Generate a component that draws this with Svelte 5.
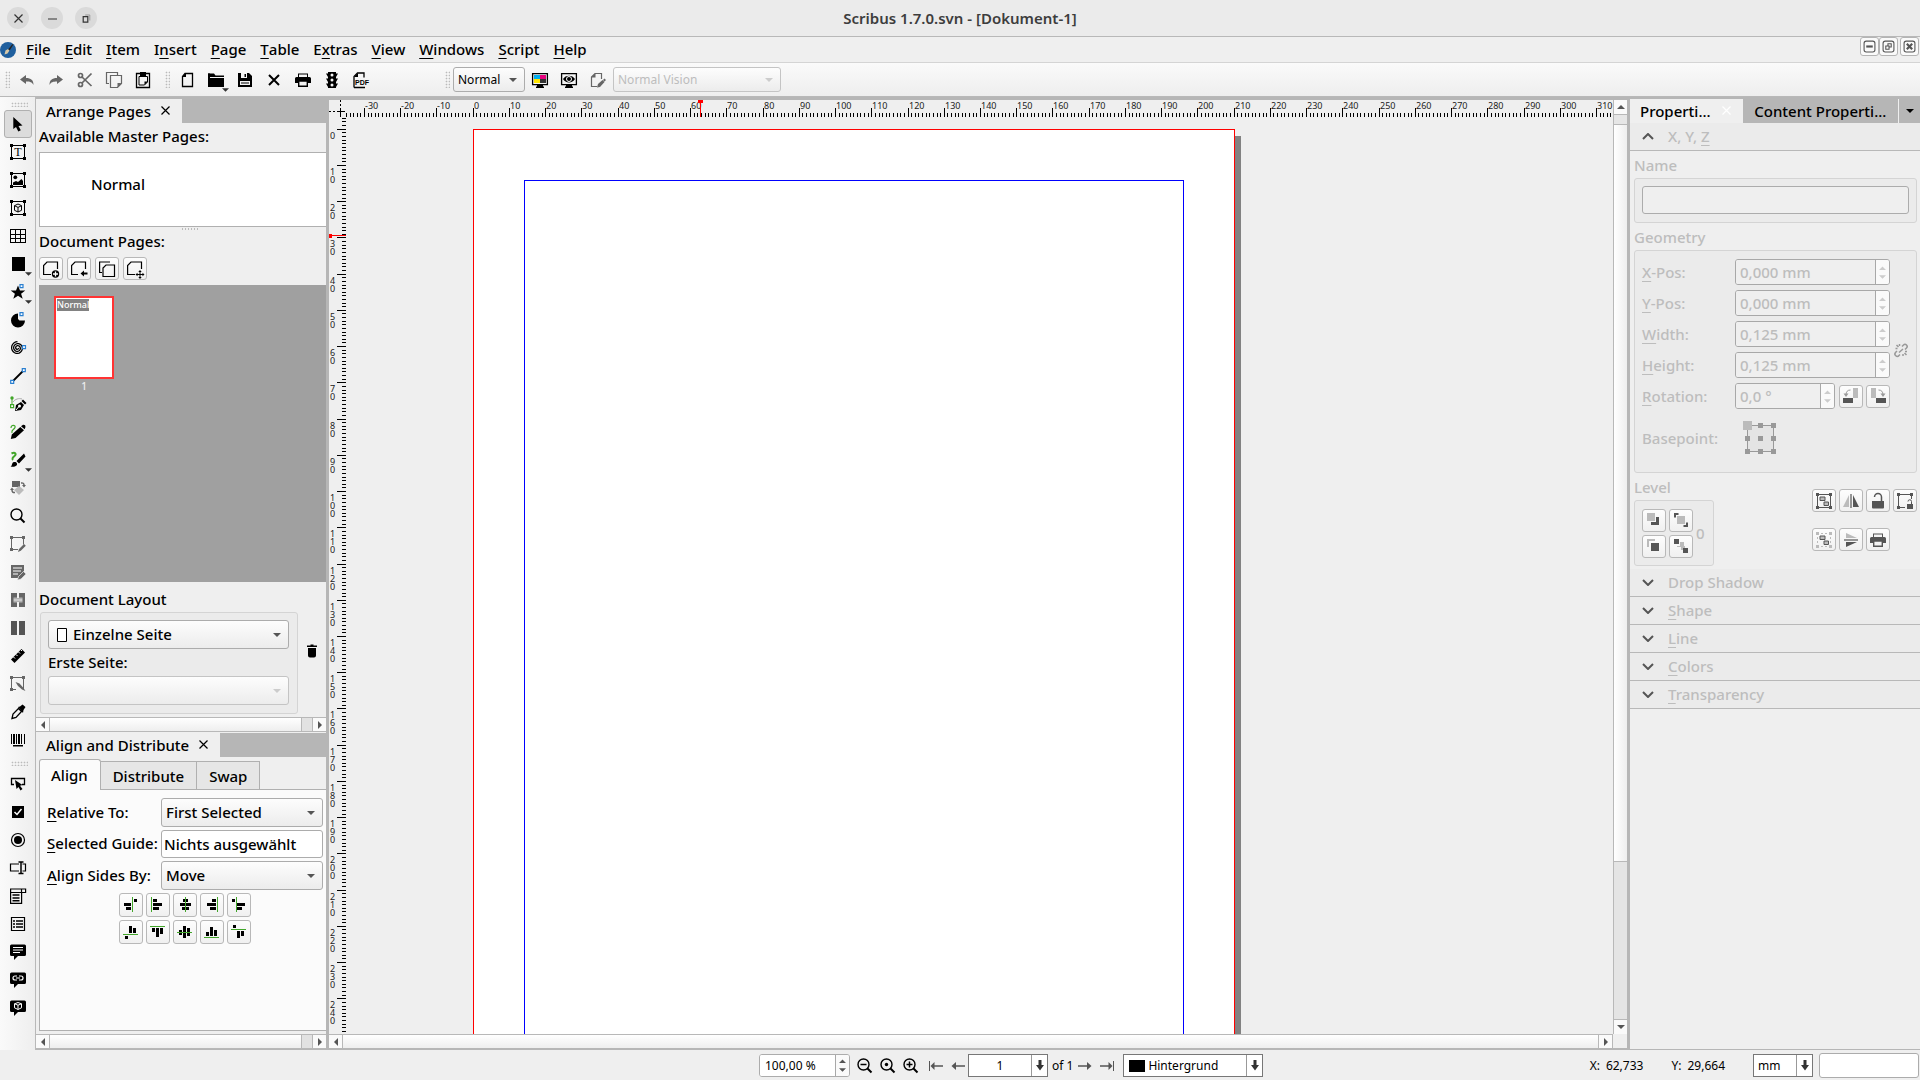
<script>
  const frame = '<path d="M1.5 1.5h13v13h-13z" fill="none" stroke="currentColor" shape-rendering="crispEdges"/><path d="M0 0h3v3H0zM13 0h3v3h-3zM0 13h3v3H0zM13 13h3v3h-3z"/>';
  const bubble = '<path d="M1.5 .5h13a1.500 1.500 0 0 1 1.500 1.500v8.500a1.500 1.500 0 0 1-1.500 1.500H8l-4 4v-4H1.500A1.500 1.500 0 0 1 0 10.500V2A1.500 1.500 0 0 1 1.500.5z"/>';
  const cube = '<path d="M8 4l3.500 1.700v4.600L8 12l-3.500-1.700V5.700zM4.500 5.700L8 7.400l3.500-1.700M8 7.400V12" fill="none" stroke="currentColor"/>';
  const lens = '<circle cx="6.500" cy="6.500" r="5.500" fill="none" stroke="currentColor" stroke-width="1.400"/><path d="M10.500 10.500l4 4" stroke="currentColor" stroke-width="2"/>';
  const blueDot = (x, y) => `<path d="M${x} ${y}h3v3h-3z" fill="#fff" stroke="#2a7fd0" stroke-width="1.200"/>`;
  const spiralPoints = Array.from({ length: 61 }, (_, n) => {
    const angle = (n / 60) * Math.PI * 5.5;
    const radius = 0.8 + (n / 60) * 5.6;
    return `${(7.5 + radius * Math.cos(angle)).toFixed(2)},${(8 + radius * Math.sin(angle)).toFixed(2)}`;
  }).join(' ');
  const icons = {
    pointer: '<path d="M3.300 1v12l2.700-2 2.300 4.500 2.500-1.200-2.300-4.300 4-.6z"/>',
    text: frame + '<text x="8" y="12" text-anchor="middle" font-size="12" font-family="Liberation Serif, serif">T</text>',
    image: frame + '<circle cx="5.300" cy="5.300" r="1.900"/><path d="M3 13v-2.500L6 9l2 1 3.500-3L13 9v4z"/>',
    render: frame + cube,
    table: '<path d="M.5 1.500h15v13H.5zM.5 6h15M.5 10.500h15M5.500 1.500v13M10.500 1.500v13" fill="none" stroke="currentColor" shape-rendering="crispEdges"/>',
    shape: '<path d="M2 1h13v14H2z"/>',
    star: '<path d="M8 1.500l2 5h5.300l-4.200 3.200 1.600 5.100L8 11.700l-4.700 3.100 1.600-5.100L.7 6.500H6z"/>' + blueDot(10, 0.7),
    arc: '<path d="M8 1.500a7 7 0 1 0 7 7H9.500L8 7z"/>' + blueDot(10, 0.7),
    spiral: `<polyline points="${spiralPoints}" fill="none" stroke="currentColor" stroke-width="1.300"/>` + blueDot(12.5, 5.7),
    line: '<path d="M3 13L13 3" stroke="currentColor" stroke-width="1.800"/>' + blueDot(0.7, 12.3) + blueDot(12.3, 0.7),
    bezier: '<path d="M2 2v7" stroke="#42a62a"/><circle cx="2" cy="2" r="1.700" fill="#42a62a"/><path d="M.6 8.600h3v3h-3z" fill="#fff" stroke="#42a62a" stroke-width="1.200"/><path d="M3 6c2-3 6-4 9-3" fill="none" stroke="#aaa"/><path d="M5 15l1-6 5-3 3 3-3 5zM11.500 5l1.500-1.500L16.500 7 15 8.500z"/><path d="M6 14l3-3.500" stroke="#fff"/><circle cx="9.500" cy="10" r="1.500" fill="#fff"/>',
    pencil: '<path d="M1 4c0-4 5-3 4-.5S1 5.500 2 9" fill="none" stroke="#42a62a" stroke-width="1.200"/><path d="M.8 15l1-4.500 8.500-7.500L14 6.300 5.500 14zM11 2.200L13 .8q2.800-.3 2.500 2.200L14.600 5.300z"/>',
    brush: '<path d="M1.500 1.500c4-2 5 1 3 2.500S2 7 3 8" fill="none" stroke="#42a62a" stroke-width="2"/><path d="M.5 14.500c2-.5 1-4 3.500-4.500s4 2 2.500 3.500-4 1.500-6 1zM6.500 9L14 1.500l1.500 3L9 11.500z"/>',
    rotate: '<g fill="#666"><path d="M2 1h8v6H2z"/><path d="M9 15l-5-5 5-4 5 4z" fill="#bbb"/><path d="M11 3q3-.5 3 2" fill="none" stroke="#666" stroke-width="1.500"/><path d="M12 5h4l-2 2.500zM0 10h4L2 7.500z"/><path d="M2 10q0 3 3 2.500" fill="none" stroke="#666" stroke-width="1.500"/></g>',
    zoom: lens,
    editframe: '<path d="M1.500 14V1.500h12v7M2 13.500h6" fill="none" stroke="#666"/><path d="M0 0h3v3H0zM12 0h3v3h-3zM0 12h3v3H0zM8 16l1-3 5-5 1.800 1.800-5 5z" fill="#666"/>',
    edittext: '<path d="M1 1h13v6l-6 6v1H1z" fill="#666"/><path d="M3 4h9M3 7h8M3 10h5" stroke="#fff"/><path d="M7.500 16l1-3.500 5-5L16 10l-5 5z" fill="#666" stroke="#eee" stroke-width=".6"/>',
    link: '<path d="M1 1h6v5h2V1h6v14H9v-5H7v5H1z" fill="#666"/><path d="M3.500 6.500h9v3h-9z" fill="#ccc"/><path d="M3.500 6h9M3.500 10h9" stroke="#eee" stroke-width=".6"/>',
    unlink: '<path d="M1 1h6v14H1zM9 1h6v14H9z" fill="#555"/>',
    measure: '<path d="M1 11.500L11.500 1 15 4.500 4.500 15z"/><path d="M3.500 9l1.500 1.500M6 6.500L7.500 8M8.500 4L10 5.500M11 2l1 1" stroke="#fff"/>',
    copyprops: '<path d="M1.500 14V1.500h12V14M2 13.500h4" fill="none" stroke="#666"/><path d="M0 0h3v3H0zM12 0h3v3h-3zM0 12h3v3H0zM5.500 6l4 1.500 4 4.500 2 3-3.500-1.500L8 10z" fill="#666"/>',
    dropper: '<path d="M2 14.500l1-4.500L8.500 4.500l3 3L6 13.500z" fill="none" stroke="currentColor" stroke-width="1.300"/><path d="M8 3l2-.5 2.500-2 3 2.500-2 3-.5 3z"/>',
    barcode: '<path d="M1 2h1v10H1zM3 2h2v10H3zM6 2h1v10H6zM8 2h2v10H8zM11 2h1v10h-1zM14 2h1v10h-1zM3 13h10v1.500H3z"/>',
    pdfbutton: '<path d="M4 8.500H1.500v-6h13v6H12" fill="none" stroke="currentColor" stroke-width="1.300"/><path d="M5 4l7.500 5-2.500.7 2.500 3.300-2 1.500-2-3.500L6.500 13z"/>',
    check: '<path d="M2 2h12v12H2z"/><path d="M4.500 8l2.500 2.500L11.500 5" fill="none" stroke="#fff" stroke-width="1.500"/>',
    radio: '<circle cx="8" cy="8" r="6.500" fill="none" stroke="currentColor" stroke-width="1.200"/><circle cx="8" cy="8" r="4"/>',
    field: '<path d="M9 4H.5v7H9M12.500 4h3v7h-3" fill="none" stroke="currentColor" stroke-width="1.200"/><path d="M8.500 2h5M8.500 13.500h5M11 2v11.500" stroke="currentColor" stroke-width="1.500"/>',
    combo: '<path d="M.6 1h15v3.500H.6zM.6 4.500V15.400h11V4.500M11.500 1v3.500" fill="none" stroke="currentColor" stroke-width="1.200"/><path d="M2.500 7h7M2.500 10h7M2.500 12.800h7" stroke="currentColor" stroke-width="1.500"/>',
    list: '<path d="M1.500 1.500h13v13h-13z" fill="none" stroke="currentColor" stroke-width="1.200"/><path d="M3 5h2M6 5h7M3 8h2M6 8h7M3 11h2M6 11h7" stroke="currentColor" stroke-width="1.700"/>',
    note: bubble + '<path d="M3 3.500h10M3 6h10M3 8.500h7" stroke="#fff"/>',
    linknote: bubble + '<path d="M7 4H5a2 2 0 0 0 0 4h2M9 4h2a2 2 0 0 1 0 4H9M6 6h4" fill="none" stroke="#fff" stroke-width="1.200"/>',
    cubenote: bubble + '<path d="M8 2.500l3.500 1.300v4L8 9.500 4.500 7.800v-4zM4.500 3.800L8 5.200l3.500-1.400M8 5.200v4" fill="none" stroke="#fff"/>',
    undo: '<path d="M1 7.500L7 3v3c5 0 7.500 2 7.500 7-1.500-3-3.500-3.500-7.500-3.500V12z" fill="#666"/>',
    redo: '<path d="M15 7.500L9 3v3c-5 0-7.500 2-7.500 7C3 10 5 9.500 9 9.500V12z" fill="#666"/>',
    cut: '<g fill="none" stroke="#666" stroke-width="1.700"><path d="M5 5l9.500 9M5 11l9.500-9.500"/><circle cx="3.500" cy="3.500" r="2"/><circle cx="3.500" cy="12.500" r="2"/></g>',
    copy: '<path d="M3 11.500H.5V.5h11V3M4.500 3.500h11v8l-4 4h-7z" fill="none" stroke="#666" stroke-width="1.200"/><path d="M15.500 11h-4v4.500z" fill="#666"/>',
    paste: '<path d="M1.500 1.500h13v14h-13z" fill="none" stroke="currentColor" stroke-width="1.300"/><path d="M5 0h6v4H5z"/><path d="M4 4.500h8.500V10L9.500 13H4z" fill="none" stroke="currentColor"/><path d="M13 9.500H9.500V13z"/>',
    newdoc: '<path d="M6 1.500h7.500v13h-10v-10z" fill="none" stroke="currentColor" stroke-width="1.300"/><path d="M3 5l4-4v4z"/>',
    open: '<path d="M0 1.500h6l1.500 2H16V5H0zM0 6h16v9H0z"/><path d="M0 1.500h2V15H0z"/>',
    save: '<path d="M1 1h11l3 3v11H1z"/><path d="M4 1h6v5H4zM3 9h10v4H3z" fill="#f4f4f4"/><path d="M7.500 2H9v3H7.500zM4 10.500h8v1H4z"/>',
    close: '<path d="M3 3l10 10M13 3L3 13" stroke="currentColor" stroke-width="2"/>',
    print: '<path d="M3 1.500h10V5H3zM1.500 5h13A1.500 1.500 0 0 1 16 6.500V11h-3V9H3v2H0V6.500A1.500 1.500 0 0 1 1.500 5z"/><path d="M4 2.500h8V5H4z" fill="#f4f4f4"/><path d="M3.700 9h8.600v5.300H3.700z" fill="#f4f4f4" stroke="currentColor" stroke-width="1.400"/>',
    preflight: '<path d="M4 0h8v16H4z"/><path d="M2 1.500h12L12 5H4zM2 6.500h12l-2 3.500H4zM2 11.500h12L12 15H4z"/><g fill="#f4f4f4"><circle cx="8" cy="3" r="1.500"/><circle cx="8" cy="8" r="1.500"/><circle cx="8" cy="13" r="1.500"/></g>',
    pdf: '<path d="M1 15.500v-11L4.500 1H11v4.500M1 15.500h11" fill="none" stroke="currentColor" stroke-width="1.300"/><path d="M1 5l4-4v4z"/><text x="2" y="12.500" font-size="7" font-weight="700" font-family="Liberation Sans, sans-serif">PDF</text>',
    color: '<path d="M.6 1.600h14.800v11H.6z" fill="none" stroke="currentColor" stroke-width="1.300"/><path d="M5 13h6v1.500h1V16H4v-1.500h1z"/><path d="M2 3h6v4H2z" fill="#00aeef"/><path d="M8 3h6v4H8z" fill="#e6007e"/><path d="M2 7h6v4H2z" fill="#ffe600"/><path d="M8 7h6v4H8z" fill="#333"/>',
    preview: '<path d="M.6 1.600h14.800v11H.6z" fill="none" stroke="currentColor" stroke-width="1.300"/><path d="M5 13h6v1.500h1V16H4v-1.500h1zM2 7c2.500-4.500 9.500-4.500 12 0-2.500 4.500-9.500 4.500-12 0z"/><circle cx="8" cy="7" r="2.500" fill="none" stroke="#fff"/>',
    editdoc: '<path d="M7 14.500H1.500V5L5 1.500h6.500V7" fill="none" stroke="#666" stroke-width="1.200"/><path d="M1 5.500L5.500 1v4.500zM7 15.500l1-3.500 4.500-4 2 2-4.500 5zM13 8l1.500-1.500L16 8l-1.500 1.500z" fill="#666"/>',
    pageadd: '<path d="M8 13.500H.6V4.500L4 1h10.500v7" fill="none" stroke="currentColor" stroke-width="1.200"/><circle cx="12.500" cy="13" r="3.700"/><path d="M10 13h5M12.500 10.500v5" stroke="#fff" stroke-width="1.300"/>',
    pageimport: '<path d="M7 13.500H.6V4.500L4 1h10.500v7" fill="none" stroke="currentColor" stroke-width="1.200"/><path d="M9.500 12.500l3.500-3v2h3.500v2H13v2z"/>',
    pagecopy: '<path d="M3 11.500H.6V1H11M7 4h8.500v11.500H4V7z" fill="none" stroke="currentColor" stroke-width="1.200"/>',
    pagemove: '<path d="M8 13.500H.6V4.500L4 1h10.500v7" fill="none" stroke="currentColor" stroke-width="1.200"/><path d="M13 10v7M9.500 13.500h7" stroke="currentColor"/><path d="M13 9l1.700 2h-3.400zM13 18l1.700-2h-3.400zM8.500 13.500l2-1.700v3.400zM17.500 13.500l-2-1.700v3.400z"/>',
    trash: '<path d="M3 2.500h10V4H3zM6.500 1.500h3v1.500h-3zM4 5h8v7.500a2 2 0 0 1-2 2H6a2 2 0 0 1-2-2z"/>',
    rotleft: '<path d="M0 10h10v5H0z" fill="#555"/><path d="M10 0h5v10h-5z" fill="#bbb"/><path d="M7.500 2Q3 2 3 7" fill="none" stroke="#999"/><path d="M.5 5.500h5L3 9z" fill="#999"/>',
    rotright: '<path d="M6 10h10v5H6z" fill="#555"/><path d="M1 0h5v10H1z" fill="#bbb"/><path d="M8.500 2Q13 2 13 7" fill="none" stroke="#999"/><path d="M10.500 5.500h5L13 9z" fill="#999"/>',
    chain: '<g fill="none" stroke="#999" stroke-width="1.500"><path d="M7 12.500l-1 1a2.100 2.100 0 0 1-3.500-3L4 9M9 4.500l1.500-1.500a2.100 2.100 0 0 1 3 3L12 7.500M6 10.500L10 7M3.500 3l2 2M6.500 2v2M10 12v2M11.500 11l2 2M2.500 6.500h2M12 9.500h2"/></g>',
    raise: '<path d="M1 1h8v8H1z" fill="#bbb"/><path d="M10 5h3v8H5v-3h5z" fill="#555"/>',
    top: '<path d="M4 4h8v8H4z" fill="#bbb"/><path d="M1 5.500V1h4.500v2H3v2.500zM15 10.500V15h-4.500v-2H13v-2.500z" fill="#555"/>',
    lower: '<path d="M1 1h8v2H3v6H1z" fill="#bbb"/><path d="M5 5h8v8H5z" fill="#555"/>',
    bottom: '<path d="M4 8h3V4h4v4h1v4H8V9H4z" fill="#bbb"/><path d="M1 1h5v5H1zM10 10h5v5h-5z" fill="#555"/>',
    group: frame + '<path d="M4 4h5v3.500H4zM8 9h4.500v3.500H8z" fill="#bbb" stroke="currentColor"/>',
    ungroup: '<path d="M0 0h3v3H0zM13 0h3v3h-3zM0 13h3v3H0zM13 13h3v3h-3z" fill="#bbb"/><path d="M5 1.500h6M5 14.500h6M1.500 5v6M14.500 5v6" stroke="#bbb" stroke-dasharray="2 2"/><path d="M4 4h5v3.500H4zM8 9h4.500v3.500H8z" fill="#bbb" stroke="currentColor"/>',
    fliph: '<path d="M0 14L6 2v12z" fill="#bbb"/><path d="M16 14L10 2v12z"/><path d="M8 1v14" stroke="currentColor" stroke-width="1.200"/>',
    flipv: '<path d="M3 1l11 5H3z" fill="#bbb"/><path d="M3 15l11-5H3z"/><path d="M1 8h14" stroke="currentColor" stroke-width="1.200"/>',
    lock: '<path d="M2 8h12v6.500a1 1 0 0 1-1 1H3a1 1 0 0 1-1-1z"/><path d="M4.500 4a3.500 3.500 0 0 1 7 0v4" fill="none" stroke="currentColor" stroke-width="1.500"/>',
    locksize: '<path d="M1.500 1.500h13V6M1.500 1.500v13H8" fill="none" stroke="currentColor"/><path d="M0 0h3v3H0zM13 0h3v3h-3zM0 13h3v3H0zM10 11h6v5h-6z"/><path d="M11 8.500a1.700 1.700 0 0 1 3.500 0V11" fill="none" stroke="currentColor"/>',
    lensminus: lens + '<path d="M3.500 6.500h6" stroke="currentColor" stroke-width="1.500"/>',
    lensdot: lens + '<circle cx="6.500" cy="6.500" r="1.700"/>',
    lensplus: lens + '<path d="M3.500 6.500h6M6.500 3.500v6" stroke="currentColor" stroke-width="1.500"/>',
    first: '<path d="M1.500 3v10" stroke="#555"/><path d="M5 8h10" stroke="#555" stroke-width="1.500"/><path d="M2.500 8l4-4v8z" fill="#555"/>',
    prev: '<path d="M3 8h12" stroke="#555" stroke-width="1.500"/><path d="M1.500 8l4.500-4v8z" fill="#555"/>',
    next: '<path d="M1 8h12" stroke="#555" stroke-width="1.500"/><path d="M14.500 8L10 4v8z" fill="#555"/>',
    last: '<path d="M14.500 3v10" stroke="#555"/><path d="M1 8h10" stroke="#555" stroke-width="1.500"/><path d="M13.500 8l-4-4v8z" fill="#555"/>',
    al1: '<path d="M9.500 0v15" stroke="#42a62a"/><path d="M11 2h3v3h-3zM1 6h7v3H1zM3 10h5v3H3z"/>',
    al2: '<path d="M1.500 0v15" stroke="#42a62a"/><path d="M3 2h4v3H3zM3 6h9v3H3zM3 10h6v3H3z"/>',
    al3: '<path d="M6 2h5v3H6zM3 6h11v3H3zM5 10h7v3H5z"/><path d="M8.500 0v15" stroke="#42a62a"/>',
    al4: '<path d="M13.500 0v15" stroke="#42a62a"/><path d="M8 2h4v3H8zM3 6h9v3H3zM6 10h6v3H6z"/>',
    al5: '<path d="M5.500 0v15" stroke="#42a62a"/><path d="M1 2h3v3H1zM6 6h8v3H6zM6 10h5v3H6z"/>',
    al6: '<path d="M0 10.500h15" stroke="#42a62a"/><path d="M2 12h3v3H2zM6 2h3v7H6zM10 4h3v5h-3z"/>',
    al7: '<path d="M0 2.500h15" stroke="#42a62a"/><path d="M2 4h3v4H2zM6 4h3v9H6zM10 4h3v6h-3z"/>',
    al8: '<path d="M2 6h3v5H2zM6 2h3v12H6zM10 4h3v8h-3z"/><path d="M0 8.500h15" stroke="#42a62a"/>',
    al9: '<path d="M0 13.500h15" stroke="#42a62a"/><path d="M2 8h3v4H2zM6 3h3v9H6zM10 6h3v6h-3z"/>',
    al10: '<path d="M0 5.500h15" stroke="#42a62a"/><path d="M2 1h3v3H2zM6 7h3v7H6zM10 7h3v5h-3z"/>',
  };

  const menus = [['', 'F', 'ile'], ['', 'E', 'dit'], ['', 'I', 'tem'], ['I', 'n', 'sert'], ['', 'P', 'age'], ['', 'T', 'able'], ['E', 'x', 'tras'], ['', 'V', 'iew'], ['', 'W', 'indows'], ['', 'S', 'cript'], ['', 'H', 'elp']];
  const editTools = ['undo', 'redo', 'cut', 'copy', 'paste'];
  const fileTools = ['newdoc', 'open', 'save', 'close', 'print', 'preflight', 'pdf'];
  const tools = ['pointer', 'text', 'image', 'render', 'table', 'shape', 'star', 'arc', 'spiral', 'line', 'bezier', 'pencil', 'brush', 'rotate', 'zoom', 'editframe', 'edittext', 'link', 'unlink', 'measure', 'copyprops', 'dropper', 'barcode'];
  const pdfTools = ['pdfbutton', 'check', 'radio', 'field', 'combo', 'list', 'note', 'linknote', 'cubenote'];
  const withMenu = ['open', 'shape', 'star', 'brush'];
  const geometry = [
    { id: 'xpos', key: 'X', rest: '-Pos:', value: '0,000 mm' },
    { id: 'ypos', key: 'Y', rest: '-Pos:', value: '0,000 mm' },
    { id: 'width', key: 'W', rest: 'idth:', value: '0,125 mm' },
    { id: 'height', key: 'H', rest: 'eight:', value: '0,125 mm' },
  ];
  const sections = [['', 'Drop Shadow'], ['S', 'hape'], ['L', 'ine'], ['C', 'olors'], ['T', 'ransparency']];

  let viewWidth = $state(1267);
  let viewHeight = $state(917);
  const scale = 3.6235;
  const originX = 127;
  const originY = 12;
  const pageRight = originX + Math.round(210 * scale);
  const ticks = (origin, length) => {
    const out = [];
    for (let mm = Math.ceil(-origin / scale); origin + mm * scale < length - 1; mm++) {
      out.push({ mm, at: Math.floor(origin + mm * scale + 0.2), major: mm % 10 === 0 });
    }
    return out;
  };
  const hTicks = $derived(ticks(originX, viewWidth));
  const vTicks = $derived(ticks(originY, viewHeight));
</script>

{#snippet icon(name)}
  <svg class="icon" viewBox="0 0 16 16" fill="currentColor" aria-hidden="true">{@html icons[name]}</svg>
{/snippet}

{#snippet tool(name, active = false)}
  <button class="tool" class:active aria-label={name}>
    {@render icon(name)}
    {#if withMenu.includes(name)}<svg class="more" viewBox="0 0 8 4" aria-hidden="true"><path d="M0 0h8L4 4z" fill="#333" /></svg>{/if}
  </button>
{/snippet}

{#snippet caret()}
  <svg class="caret" viewBox="0 0 8 4" aria-hidden="true"><path d="M0 0h8L4 4z" fill="currentColor" /></svg>
{/snippet}

{#snippet hbar(tail)}
  <div class="hbar">
    <button aria-label="Scroll left"><svg viewBox="0 0 4 8"><path d="M4 0v8L0 4z" fill="#555" /></svg></button>
    <span class="thumb"></span>
    {#if tail}<span class="trough"></span>{/if}
    <button aria-label="Scroll right"><svg viewBox="0 0 4 8"><path d="M0 0v8l4-4z" fill="#555" /></svg></button>
  </div>
{/snippet}

{#snippet steps()}
  <span class="steps">
    <svg viewBox="0 0 8 14" aria-hidden="true"><path d="M0 4h8L4 0zM0 10h8l-4 4z" fill="currentColor" /></svg>
  </span>
{/snippet}

{#snippet cross()}
  <svg class="cross" viewBox="0 0 9 9" aria-hidden="true"><path d="M.5.5l8 8M8.500.5l-8 8" stroke="currentColor" stroke-width="1.200" /></svg>
{/snippet}

{#snippet down()}
  <svg viewBox="0 0 8 11" aria-hidden="true"><path d="M2.500 0h3v5H8l-4 5.500L0 5h2.500z" fill="#333" /></svg>
{/snippet}

<div class="app">
  <header class="title">
    <div class="winbtns">
      <button aria-label="Close window">{@render cross()}</button>
      <button aria-label="Minimize window"><svg viewBox="0 0 9 9"><path d="M0 5h9" stroke="#333" /></svg></button>
      <button aria-label="Restore window"><svg viewBox="0 0 9 9"><path d="M1.200 2.600h4.600v5.600H1.200z" fill="none" stroke="#333" stroke-width="1.200" /><path d="M3.200 1h4.600v5.500" fill="none" stroke="#999" /></svg></button>
    </div>
    <h1>Scribus 1.7.0.svn - [Dokument-1]</h1>
    <span></span>
  </header>

  <nav class="menubar">
    <svg class="logo" viewBox="0 0 16 16" aria-hidden="true"><circle cx="8" cy="8" r="8" fill="#1f5f9e" /><path d="M4.500 12.500l1-4L8 7l1.500 1.500-2 3z" fill="#d8c8a8" /><path d="M8.300 7.200L12.500 2l.8.8-3.600 5.600z" fill="#222" /></svg>
    {#each menus as [a, k, b]}
      <button>{a}<u>{k}</u>{b}</button>
    {/each}
    <div class="mdi">
      <button aria-label="Minimize document"><svg viewBox="0 0 12 12"><rect x="1" y="1" width="10" height="10" rx="2" fill="none" stroke="#555" /><path d="M3 6h6" stroke="#555" stroke-width="2" /></svg></button>
      <button aria-label="Restore document"><svg viewBox="0 0 12 12"><rect x="1" y="1" width="10" height="10" rx="2" fill="none" stroke="#555" /><path d="M3.500 5.500h3v3h-3zM5.500 5V3.500h3v3H7" fill="none" stroke="#555" /></svg></button>
      <button class="apart" aria-label="Close document"><svg viewBox="0 0 12 12"><rect x="1" y="1" width="10" height="10" rx="2" fill="none" stroke="#555" /><path d="M3.500 3.500l5 5M8.500 3.500l-5 5" stroke="#555" stroke-width="2" /></svg></button>
    </div>
  </nav>

  <div class="toolbar">
    <div class="group"><i class="grip"></i>{#each editTools as t}{@render tool(t)}{/each}</div>
    <div class="group"><i class="grip"></i>{#each fileTools as t}{@render tool(t)}{/each}</div>
    <div class="group view">
      <i class="grip"></i>
      <div class="select short"><select aria-label="Preview quality"><option>Normal</option></select>{@render caret()}</div>
      {@render tool('color')}{@render tool('preview')}{@render tool('editdoc')}
      <div class="select long off"><select aria-label="Vision" disabled><option>Normal Vision</option></select>{@render caret()}</div>
    </div>
  </div>

  <main>
    <div class="palette">
      <i class="grip flat"></i>
      {#each tools as t, n}{@render tool(t, n === 0)}{/each}
      <i class="grip flat lower"></i>
      {#each pdfTools as t}{@render tool(t)}{/each}
    </div>

    <aside class="left">
      <section class="dock pages">
        <div class="docktabs"><div class="docktab">Arrange Pages <button aria-label="Close Arrange Pages">{@render cross()}</button></div></div>
        <div class="body">
          <h2>Available Master Pages:</h2>
          <div class="masters"><span>Normal</span></div>
          <i class="dots"></i>
          <h2 class="pageshead">Document Pages:</h2>
          <div class="pagebtns">
            {#each ['pageadd', 'pageimport', 'pagecopy', 'pagemove'] as t}<button class="sq" aria-label={t}>{@render icon(t)}</button>{/each}
          </div>
          <div class="thumbs">
            <div class="sheet"><span>Normal</span></div>
            <small>1</small>
          </div>
          <h2 class="layouthead">Document Layout</h2>
          <div class="layoutrow">
            <div class="box">
              <div class="select"><svg class="sheeticon" viewBox="0 0 10 14" aria-hidden="true"><path d="M.5.5h9v13h-9z" fill="#fff" stroke="#000" /></svg><select class="indent" aria-label="Document Layout"><option>Einzelne Seite</option></select>{@render caret()}</div>
              <label for="first">Erste Seite:</label>
              <div class="select off"><select id="first" disabled></select>{@render caret()}</div>
            </div>
            <button class="plain" aria-label="Delete page">{@render icon('trash')}</button>
          </div>
        </div>
        {@render hbar(true)}
      </section>

      <section class="dock align">
        <div class="docktabs"><div class="docktab">Align and Distribute <button aria-label="Close Align and Distribute">{@render cross()}</button></div></div>
        <div class="body">
          <div class="tabs" role="tablist">
            <button role="tab" aria-selected="true">Align</button>
            <button role="tab" aria-selected="false">Distribute</button>
            <button role="tab" aria-selected="false">Swap</button>
          </div>
          <div class="panel">
            <div class="form">
              <label for="rel"><u>R</u>elative To:</label>
              <div class="select"><select id="rel"><option>First Selected</option></select>{@render caret()}</div>
              <label for="guide"><u>S</u>elected Guide:</label>
              <input id="guide" value="Nichts ausgewählt" />
              <label for="sides"><u>A</u>lign Sides By:</label>
              <div class="select"><select id="sides"><option>Move</option></select>{@render caret()}</div>
            </div>
            <div class="aligns">
              {#each Array(10) as _, n}<button class="sq" aria-label={`Align ${n + 1}`}>{@render icon(`al${n + 1}`)}</button>{/each}
            </div>
          </div>
        </div>
        {@render hbar(true)}
      </section>
    </aside>

    <section class="editor">
      <svg class="corner" viewBox="0 0 17 17" shape-rendering="crispEdges" aria-hidden="true"><path d="M11.500 0v9M0 11.500h9" stroke="#000" stroke-dasharray="2 2" /><path d="M11.500 8v9M8 11.500h8" stroke="#000" /></svg>
      <div class="ruler h">
        <svg shape-rendering="crispEdges">
          {#each hTicks as t}
            <path d={`M${t.at + 0.5} ${t.major ? 8 : 13}V17`} stroke="#000" />
            {#if t.major}<text x={t.at + 1} y="9">{t.mm}</text>{/if}
          {/each}
          <path d="M352 0h5v3h-2v14h-1V3h-2z" fill="#f00" />
        </svg>
      </div>
      <div class="ruler v">
        <svg shape-rendering="crispEdges">
          {#each vTicks as t}
            <path d={`M${t.major ? 8 : 13} ${t.at + 0.5}H17`} stroke="#000" />
            {#if t.major && t.at + 30 < viewHeight + 12}
              <text>{#each String(t.mm) as digit, n}<tspan x="1" y={t.at + 10 + n * 8}>{digit}</tspan>{/each}</text>
            {/if}
          {/each}
          <path d="M0 117h3v1h14v1H3v2H0z" fill="#f00" />
        </svg>
      </div>
      <div class="view-area" bind:clientWidth={viewWidth} bind:clientHeight={viewHeight}>
        <svg shape-rendering="crispEdges" aria-label="Page 1">
          <rect x={pageRight + 1} y="19" width="6" height="1100" fill="#828282" />
          <rect x={originX + 0.5} y="12.5" width={pageRight - originX} height="1076" fill="#fff" stroke="#f00" />
          <rect x="178.5" y="63.5" width="659" height="974" fill="none" stroke="#00f" />
        </svg>
      </div>
      <div class="vbar">
        <button aria-label="Scroll up"><svg viewBox="0 0 8 4"><path d="M0 4h8L4 0z" fill="#555" /></svg></button>
        <span class="gap"></span>
        <span class="vthumb"></span>
        <span class="vtrough"></span>
        <button aria-label="Scroll down"><svg viewBox="0 0 8 4"><path d="M0 0h8L4 4z" fill="#555" /></svg></button>
      </div>
      <div class="hwrap">{@render hbar(false)}</div>
    </section>

    <aside class="right">
      <div class="docktabs">
        <div class="docktab">Properti... <button class="faint" aria-label="Close Properties">{@render cross()}</button></div>
        <button class="idle">Content Properti...</button>
        <button class="droptab" aria-label="All tabs">{@render caret()}</button>
      </div>
      <button class="section"><svg viewBox="0 0 12 7"><path d="M1 6l5-5 5 5" fill="none" stroke="#555" stroke-width="2" /></svg><span>X, Y, <u>Z</u></span></button>
      <div class="props">
        <label for="name">Name</label>
        <div class="box"><input id="name" disabled /></div>
        <h3>Geometry</h3>
        <div class="box geometry">
          <div class="linked">
            <div class="fields">
              {#each geometry as g}
                <label for={g.id}><u>{g.key}</u>{g.rest}</label>
                <div class="spin"><input id={g.id} value={g.value} disabled />{@render steps()}</div>
              {/each}
            </div>
            <button class="plain" aria-label="Keep proportions">{@render icon('chain')}</button>
          </div>
          <div class="rotation">
            <label for="rot"><u>R</u>otation:</label>
            <div class="spin"><input id="rot" value="0,0 °" disabled />{@render steps()}</div>
            <button class="sq" aria-label="Rotate left">{@render icon('rotleft')}</button>
            <button class="sq" aria-label="Rotate right">{@render icon('rotright')}</button>
          </div>
          <div class="base">
            <span>Basepoint:</span>
            <svg viewBox="0 0 33 33" shape-rendering="crispEdges" aria-hidden="true">
              <path d="M4.500 4.500h26v26h-26z" fill="#e4e4e4" stroke="#999" />
              {#each [4, 17, 30] as x}{#each [4, 17, 30] as y}<rect x={x - 2} y={y - 2} width="5" height="5" fill="#999" />{/each}{/each}
              <path d="M0 0h9v9H0z" fill="#bbb" />
            </svg>
          </div>
        </div>
        <div class="levels">
          <div>
            <h3>Level</h3>
            <div class="box level">
              <div class="order">
                {#each ['raise', 'top', 'lower', 'bottom'] as t}<button class="sq" aria-label={t}>{@render icon(t)}</button>{/each}
              </div>
              <span>0</span>
            </div>
          </div>
          <div class="actions">
            {#each ['group', 'fliph', 'lock', 'locksize', 'ungroup', 'flipv', 'print'] as t}<button class="sq" aria-label={t}>{@render icon(t)}</button>{/each}
          </div>
        </div>
      </div>
      {#each sections as [k, rest]}
        <button class="section"><svg viewBox="0 0 12 7"><path d="M1 1l5 5 5-5" fill="none" stroke="#555" stroke-width="2" /></svg><span>{#if k}<u>{k}</u>{/if}{rest}</span></button>
      {/each}
    </aside>
  </main>

  <footer>
    <div class="pager">
      <div class="spin zoomlevel"><input aria-label="Zoom" value="100,00 %" />{@render steps()}</div>
      <div class="lenses">
        {#each ['lensminus', 'lensdot', 'lensplus'] as t}<button class="plain" aria-label={t}>{@render icon(t)}</button>{/each}
      </div>
      <div class="arrows">
        {#each ['first', 'prev'] as t}<button class="plain" aria-label={t}>{@render icon(t)}</button>{/each}
      </div>
      <div class="flatselect page"><select aria-label="Page"><option>1</option></select>{@render down()}</div>
      <span class="of">of 1</span>
      <div class="arrows">
        {#each ['next', 'last'] as t}<button class="plain" aria-label={t}>{@render icon(t)}</button>{/each}
      </div>
      <div class="flatselect layer"><i class="swatch"></i><select aria-label="Layer"><option>Hintergrund</option></select>{@render down()}</div>
    </div>
    <div class="coords">
      <span>X:</span><span class="num">62,733</span><span>Y:</span><span class="num">29,664</span>
      <div class="flatselect unit"><select aria-label="Unit"><option>mm</option></select>{@render down()}</div>
      <input class="status" aria-label="Status" />
    </div>
  </footer>
</div>

<style>
  :global(body) { margin: 0; overflow: hidden; }
  .app, .app * { box-sizing: border-box; }
  .app { display: flex; flex-direction: column; height: 100vh; background: #efefef; color: #000; font: 500 15px/20px "Noto Sans", "Open Sans", sans-serif; white-space: nowrap; }
  button, input, select { font: inherit; color: inherit; margin: 0; padding: 0; }
  button { background: none; border: 0; display: inline-flex; align-items: center; justify-content: center; }
  svg { display: block; flex: none; }
  h1, h2, h3 { margin: 0; font-size: inherit; font-weight: inherit; }
  u { text-decoration: underline; text-decoration-thickness: 1px; text-underline-offset: 3px; text-decoration-skip-ink: none; }
  .icon { width: 16px; height: 16px; overflow: visible; }
  .caret { width: 8px; height: 4px; color: #555; }
  .cross { width: 9px; height: 9px; }

  .title { display: grid; grid-template-columns: 1fr auto 1fr; align-items: center; height: 37px; background: #ebebeb; border-bottom: 1px solid #b8b8b8; }
  .title h1 { font-weight: 600; color: #3d3d3d; }
  .winbtns { display: flex; gap: 12px; padding-left: 7px; }
  .winbtns button { width: 22px; height: 22px; border-radius: 50%; background: #dadada; color: #333; }
  .winbtns svg { width: 9px; height: 9px; }

  .menubar { display: flex; align-items: center; height: 26px; border-bottom: 1px solid #d4d4d4; }
  .logo { width: 16px; height: 16px; margin-right: 3px; }
  .menubar > button { padding: 0 7px 2px; }
  .mdi { display: flex; margin-left: auto; padding-right: 1px; align-self: flex-start; }
  .mdi button { width: 19px; height: 19px; border: 1px solid #b4b4b4; border-radius: 3px; background: #fafafa; }
  .mdi svg { width: 13px; height: 13px; }
  .mdi .apart { margin-left: 2px; }

  .toolbar { display: flex; height: 34px; padding-left: 5px; background: linear-gradient(#fafafa, #eee); border-bottom: 1px solid #b8b8b8; font-size: 12px; font-weight: 400; }
  .group { display: flex; align-items: center; margin-right: 8px; }
  .group.view { margin-left: 62px; }
  .grip { width: 5px; height: 17px; margin-right: 2px; background: radial-gradient(circle, #bbb 40%, transparent 50%) 0 0 / 3px 3px; }
  .view .grip { margin-right: 3px; }
  .grip.flat { width: 17px; height: 5px; margin: 5px 0 3px 7px; flex: none; }
  .grip.lower { margin: 7px 0 4px 7px; }
  .tool { width: 29px; height: 28px; position: relative; flex: none; }
  .more { position: absolute; right: 1px; bottom: 2px; width: 7px; height: 4px; }

  .select { display: grid; align-items: center; height: 29px; border: 1px solid #acacac; border-radius: 3px; background: linear-gradient(#fdfdfd, #ececec); }
  .select > * { grid-area: 1 / 1; }
  .select select { appearance: none; border: 0; background: none; width: 100%; height: 100%; padding: 0 22px 2px 4px; outline: 0; opacity: 1; }
  .select select.indent { padding-left: 24px; }
  .sheeticon { width: 10px; height: 14px; margin-left: 8px; }
  .select .caret { justify-self: end; margin-right: 7px; pointer-events: none; }
  .select.short { width: 72px; height: 25px; }
  .select.long { width: 168px; height: 25px; margin-left: 1px; }
  .toolbar .select select { padding-bottom: 0; }
  .off { border-color: #c4c4c4; color: #bdbdbd; }
  .off .caret { color: #ccc; }

  main { flex: 1; min-height: 0; display: grid; grid-template-columns: 36px 293px 1fr 293px; }
  .palette { display: flex; flex-direction: column; border-right: 1px solid #b8b8b8; background: linear-gradient(90deg, #fafafa, #eee); padding: 0 3px 0 4px; overflow: hidden; }
  .palette .tool { width: 28px; }
  .palette .active { border: 1px solid #b0b0b0; border-radius: 3px; background: #dcdcdc; }
  .palette .more { right: 0; bottom: 2px; }

  .left { display: flex; flex-direction: column; min-width: 0; min-height: 0; border-top: 2px solid #b6b6b6; border-right: 3px solid #b6b6b6; }
  .dock { display: flex; flex-direction: column; min-height: 0; }
  .dock.pages { flex: 1; }
  .dock.align { flex: 0 0 318px; border-bottom: 1px solid #b6b6b6; }
  .dock .body { flex: 1; display: flex; flex-direction: column; min-height: 0; padding-left: 3px; }
  .docktabs { display: flex; flex: none; height: 24px; background: #b6b6b6; }
  .docktab { display: flex; align-items: center; gap: 10px; padding: 0 12px 1px 10px; background: #efefef; }
  .body h2 { height: 29px; line-height: 26px; }
  .masters { height: 75px; border: 1px solid #b0b0b0; border-right: 0; background: #fff; padding: 21px 0 0 51px; }
  .dots { width: 17px; height: 2px; margin: 1px 0 0 142px; background: radial-gradient(circle, #bbb 40%, transparent 50%) 0 0 / 3px 2px; }
  .body h2.pageshead { height: 27px; line-height: 22px; }
  .pagebtns { display: flex; gap: 4px; margin-bottom: 5px; }
  .sq { width: 24px; height: 23px; flex: none; border: 1px solid #b8b8b8; border-radius: 3px; background: linear-gradient(#fdfdfd, #f0f0f0); }
  .thumbs { flex: 1; min-height: 100px; background: #a0a0a0; padding: 11px 0 0 15px; }
  .sheet { width: 60px; height: 83px; border: 2px solid #f33; background: #fff; padding: 1px; font-size: 9px; line-height: 12px; }
  .sheet span { display: inline-block; background: #828282; color: #fff; }
  .thumbs small { display: block; width: 60px; text-align: center; font-size: 10px; line-height: 14px; color: #eee; }
  .body h2.layouthead { height: 30px; line-height: 34px; }
  .layoutrow { display: flex; align-items: center; padding: 0 0 3px 1px; }
  .box { border: 1px solid #d4d4d4; border-radius: 3px; background: #ebebeb; padding: 7px; }
  .layoutrow .box { width: 258px; height: 102px; padding-right: 8px; }
  .layoutrow label { display: block; height: 27px; line-height: 26px; }
  .plain { flex: none; }
  .layoutrow .plain { margin: -24px 0 0 6px; }

  .hbar { display: flex; flex: none; height: 15px; border-top: 1px solid #b8b8b8; border-bottom: 1px solid #b8b8b8; background: #fafafa; }
  .hbar button { width: 13px; }
  .hbar button svg { width: 4px; height: 8px; }
  .hbar .thumb { flex: 1; border: 1px solid #b8b8b8; border-width: 0 1px; background: linear-gradient(#fff, #eee); }
  .hbar .trough { width: 11px; border-right: 1px solid #b8b8b8; background: #e2e2e2; }

  .align .docktabs { margin-top: 1px; }
  .align .body { padding-top: 3px; padding-bottom: 3px; }
  .tabs { display: flex; align-items: flex-end; height: 30px; border-bottom: 1px solid #b0b0b0; }
  .tabs button { height: 28px; padding: 0 12px; border: 1px solid #b0b0b0; border-bottom: 0; border-left: 0; background: #e6e6e6; }
  .tabs button:first-child { height: 31px; padding: 0 12px 0 11px; margin-bottom: -1px; border-left: 1px solid #b0b0b0; border-radius: 3px 3px 0 0; background: #fbfbfb; }
  .panel { flex: 1; border-left: 1px solid #b0b0b0; border-bottom: 1px solid #b0b0b0; background: #fbfbfb; padding: 8px 3px 0 7px; }
  .form { display: grid; grid-template-columns: 114px 1fr; row-gap: 3px; align-items: center; }
  .form label { padding-bottom: 2px; }
  .form input { width: 100%; height: 28px; padding: 0 2px; border: 1px solid #acacac; border-radius: 3px; background: #fff; }
  .aligns { display: grid; grid-template-columns: repeat(5, 24px); gap: 3px; margin: 3px 0 0 72px; }
  .aligns .sq { height: 24px; }

  .editor { display: grid; grid-template-columns: 17px 1fr 14px; grid-template-rows: 17px 1fr 14px; min-width: 0; min-height: 0; border-top: 3px solid #b6b6b6; border-bottom: 2px solid #b6b6b6; }
  .corner { width: 17px; height: 17px; }
  .ruler { min-width: 0; min-height: 0; overflow: hidden; }
  .ruler svg { width: 100%; height: 100%; overflow: hidden; }
  .ruler text { font-size: 9px; font-weight: 400; fill: #222; }
  .ruler.h { grid-area: 1 / 2; }
  .ruler.v { grid-area: 2 / 1; }
  .view-area { grid-area: 2 / 2; min-width: 0; min-height: 0; overflow: hidden; }
  .view-area svg { width: 100%; height: 100%; overflow: hidden; }
  .vbar { grid-area: 1 / 3 / 3 / 4; display: flex; flex-direction: column; border-left: 1px solid #b8b8b8; }
  .vbar button { height: 14px; flex: none; background: #fafafa; }
  .vbar button svg { width: 8px; height: 4px; }
  .vbar .gap { flex: 0 0 11px; border: 1px solid #b8b8b8; border-width: 1px 0; background: #e6e6e6; }
  .vbar .vthumb { flex: 738; background: linear-gradient(90deg, #fff, #eee); border-bottom: 1px solid #b8b8b8; }
  .vbar .vtrough { flex: 158; background: #e4e4e4; border-bottom: 1px solid #b8b8b8; }
  .hwrap { grid-area: 3 / 1 / 4 / 4; padding-right: 14px; }
  .hwrap .hbar { height: 14px; border-bottom: 0; border-right: 1px solid #b8b8b8; }

  .right { border-top: 2px solid #b6b6b6; border-left: 3px solid #b6b6b6; min-width: 0; border-bottom: 1px solid #b6b6b6; color: #bdbdbd; }
  .right .docktabs { color: #000; }
  .right .docktab { gap: 11px; padding: 0 12px 1px 10px; }
  .faint { color: #fff; }
  .idle { flex: 1; padding-bottom: 1px; }
  .droptab { width: 22px; border-left: 1px solid #efefef; }
  .droptab .caret { color: #000; }
  .section { display: flex; justify-content: flex-start; gap: 14px; width: 100%; height: 28px; padding: 0 0 1px 12px; border-bottom: 1px solid #b8b8b8; background: #ebebeb; }
  .section svg { width: 12px; height: 7px; }
  .props { padding: 0 3px 3px 4px; color: #bdbdbd; }
  .props > label, .props h3 { display: block; height: 27px; line-height: 29px; }
  .props .box > input { display: block; width: 100%; height: 28px; border: 1px solid #acacac; border-radius: 3px; background: #efefef; }
  .props .box { height: 45px; }
  .props .box.geometry { height: 223px; padding: 8px 7px; }
  .linked { display: flex; align-items: center; }
  .fields { display: grid; grid-template-columns: 93px 155px; row-gap: 5px; align-items: center; }
  .linked .plain { margin: 62px 0 0 3px; }
  .spin { display: flex; height: 26px; border: 1px solid #a8a8a8; border-radius: 3px; overflow: hidden; }
  .spin input { flex: 1; min-width: 0; border: 0; padding: 0 4px; background: #efefef; outline: 0; }
  .steps { display: flex; align-items: center; justify-content: center; width: 14px; border-left: 1px solid #a8a8a8; background: #fafafa; color: #ccc; }
  .steps svg { width: 7px; height: 13px; }
  .rotation { display: flex; align-items: center; margin-top: 5px; }
  .rotation label { width: 93px; }
  .rotation .spin { width: 100px; }
  .rotation .sq { margin-left: 3px; }
  .rotation .spin + .sq { margin-left: 4px; }
  .base { display: flex; align-items: center; margin-top: 12px; }
  .base span { width: 101px; }
  .base svg { width: 33px; height: 33px; }
  .levels { display: flex; justify-content: space-between; }
  .props .box.level { display: flex; align-items: center; gap: 3px; width: 80px; height: 66px; }
  .order { display: grid; grid-template-columns: 24px 24px; gap: 3px; }
  .actions { display: grid; grid-template-columns: repeat(4, 24px); gap: 16px 3px; align-content: start; padding-top: 16px; color: #555; }

  footer { display: flex; justify-content: space-between; align-items: center; height: 30px; flex: none; font-size: 12px; font-weight: 400; padding: 1px 1px 0 0; }
  .pager { display: flex; align-items: center; flex: 1; padding-left: 759px; }
  .zoomlevel { width: 91px; height: 23px; border-color: #acacac; background: #fff; }
  .zoomlevel input { background: #fff; padding-left: 5px; }
  .zoomlevel .steps { color: #555; }
  .lenses { display: flex; gap: 7px; margin: 0 9px 0 7px; }
  .arrows { display: flex; gap: 6px; }
  .of { margin: 0 4px; }
  .flatselect { display: grid; grid-template-columns: 1fr 15px; align-items: center; height: 23px; border: 1px solid #777; background: #fff; }
  .flatselect select { grid-area: 1 / 1; height: 100%; appearance: none; border: 0; border-right: 1px solid #999; background: none; padding: 0 4px; outline: 0; }
  .flatselect svg { grid-area: 1 / 2; width: 8px; height: 11px; justify-self: center; }
  .page { width: 80px; margin-left: 2px; }
  .page select { text-align: center; text-align-last: center; }
  .layer { width: 140px; margin-left: 8px; }
  .layer select { padding-left: 24px; }
  .swatch { grid-area: 1 / 1; width: 16px; height: 12px; margin-left: 5px; background: #000; }
  .coords { display: flex; align-items: center; }
  .num { margin: 0 28px 0 6px; }
  .unit { width: 60px; }
  .status { width: 100px; height: 25px; margin-left: 6px; border: 1px solid #acacac; border-radius: 3px; background: #fff; }
</style>
